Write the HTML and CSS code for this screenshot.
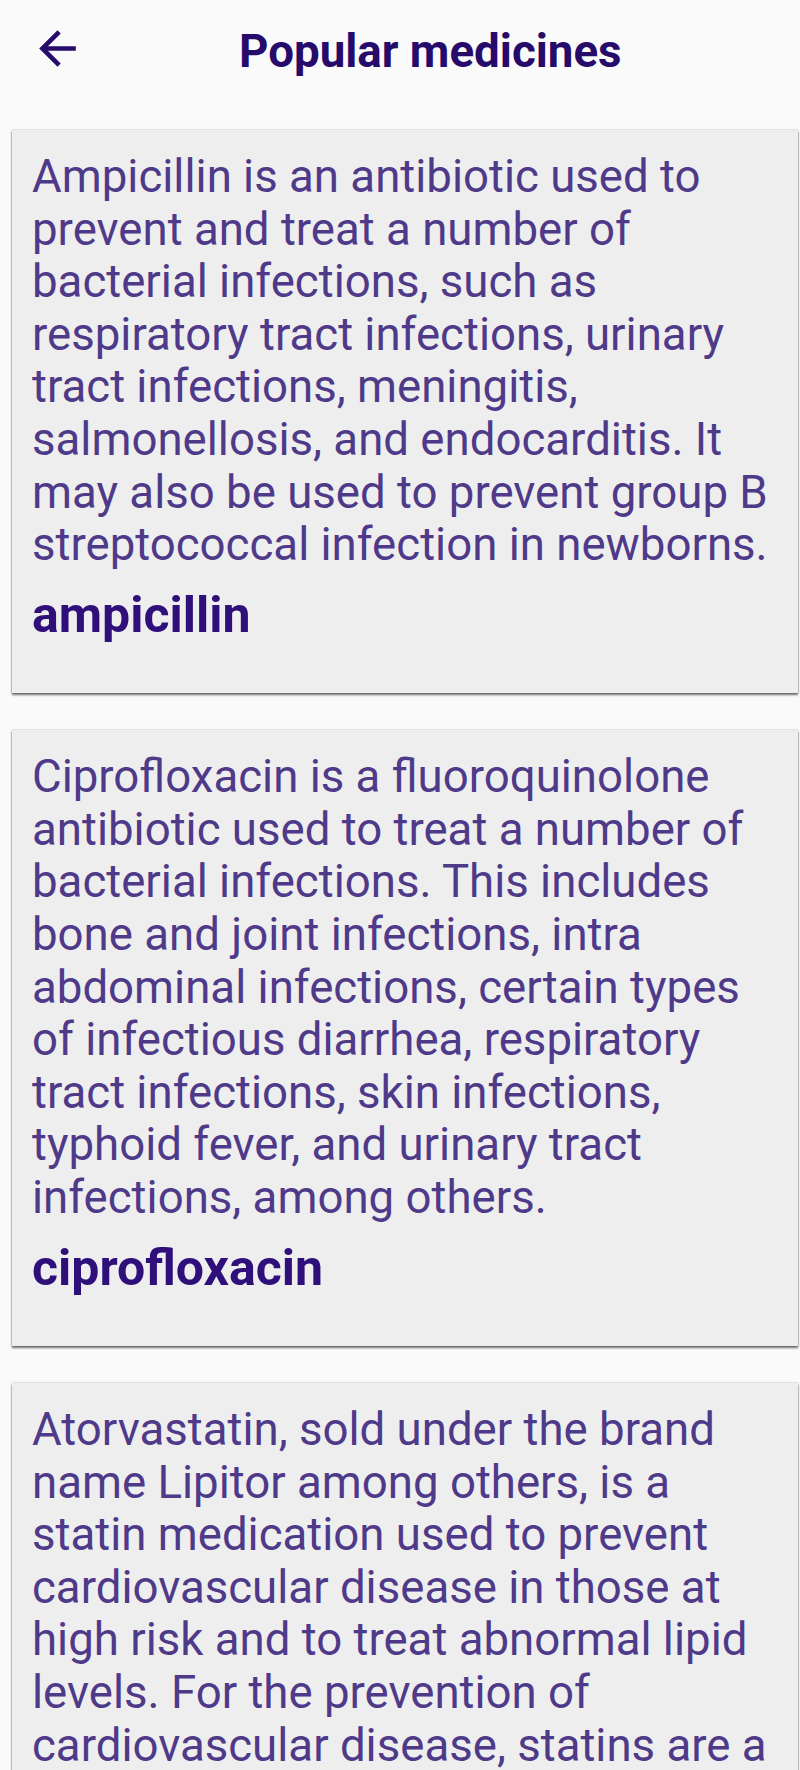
FILE: index.html
```html
<!DOCTYPE html>
<html lang="en">
<head>
<meta charset="utf-8">
<title>Popular medicines</title>
<link rel="stylesheet" href="styles.css">
</head>
<body>
<header class="toolbar">
  <button class="back" aria-label="Back">
    <svg viewBox="0 0 24 24" width="55" height="55"><path d="M20 11H7.83l5.59-5.59L12 4l-8 8 8 8 1.41-1.41L7.83 13H20v-2z" fill="currentColor"/></svg>
  </button>
  <h1 class="title">Popular medicines</h1>
</header>
<main class="list">
  <article class="card">
    <p class="desc">Ampicillin is an antibiotic used to prevent and treat a number of bacterial infections, such as respiratory tract infections, urinary tract infections, meningitis, salmonellosis, and endocarditis. It may also be used to prevent group B streptococcal infection in newborns.</p>
    <h2 class="name">ampicillin</h2>
  </article>
  <article class="card">
    <p class="desc">Ciprofloxacin is a fluoroquinolone antibiotic used to treat a number of bacterial infections. This includes bone and joint infections, intra abdominal infections, certain types of infectious diarrhea, respiratory tract infections, skin infections, typhoid fever, and urinary tract infections, among others.</p>
    <h2 class="name">ciprofloxacin</h2>
  </article>
  <article class="card">
    <p class="desc">Atorvastatin, sold under the brand name Lipitor among others, is a statin medication used to prevent cardiovascular disease in those at high risk and to treat abnormal lipid levels. For the prevention of cardiovascular disease, statins are a first-line treatment.</p>
    <h2 class="name">atorvastatin</h2>
  </article>
</main>
</body>
</html>
```
FILE: styles.css
```css
* { box-sizing: border-box; }
html, body { margin: 0; padding: 0; }
body {
  background: #fafafa;
  font-family: Roboto, "Liberation Sans", sans-serif;
  width: 800px;
  height: 1770px;
  overflow: hidden;
}
.toolbar {
  height: 96px;
  display: flex;
  align-items: center;
  padding-left: 30px;
}
.back {
  border: 0;
  background: none;
  padding: 0;
  width: 55px;
  height: 55px;
  color: #260b6b;
  display: flex;
}
.title {
  margin: 0 0 0 154px;
  padding-top: 8px;
  font-size: 45.7px;
  font-weight: 700;
  color: #260b6b;
  line-height: 52px;
}
.list {
  padding-top: 34px;
}
.card {
  margin: 0 2px 37px 12px;
  background: #eeeeee;
  padding: 21px 18px 49.5px 20px;
  box-shadow: 0 2px 2px rgba(0,0,0,0.55), 0 0 1.5px rgba(0,0,0,0.35);
}
.desc {
  margin: 0;
  font-size: 45.6px;
  line-height: 52.6px;
  color: #4f3a8a;
}
.name {
  margin: 14px 0 0;
  font-size: 50px;
  font-weight: 700;
  line-height: 58px;
  color: #2f0f7a;
}
```
